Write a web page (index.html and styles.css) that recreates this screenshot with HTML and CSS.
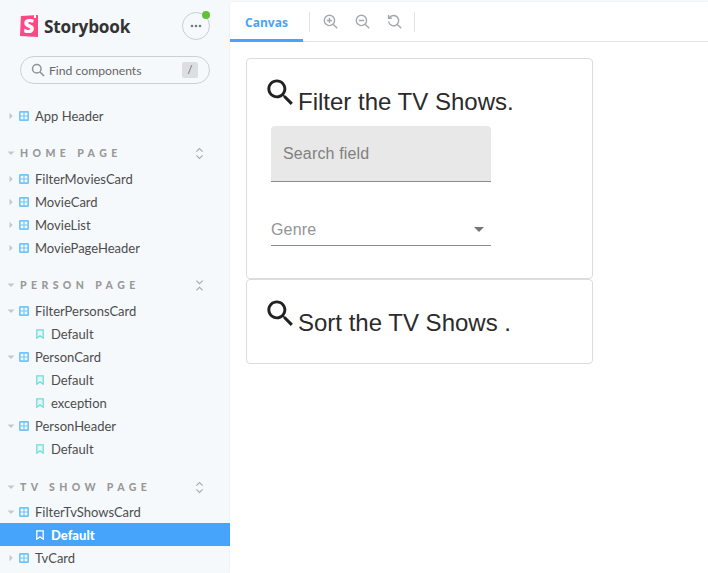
FILE: index.html
```html
<!DOCTYPE html>
<html>
<head>
    <meta charset="utf-8">
    <title>Storybook</title>
    <link rel="stylesheet" href="styles.css">
</head>
<body>
<svg class="defs" width="0" height="0">
    <symbol id="comp" viewBox="0 0 12 12"><path d="M1.500 0h9A1.500 1.500 0 0 1 12 1.500v9a1.500 1.500 0 0 1-1.500 1.500h-9A1.500 1.500 0 0 1 0 10.500v-9A1.500 1.500 0 0 1 1.500 0zM2 2v3.300h3.300V2zm4.700 0v3.300H10V2zM2 6.700V10h3.300V6.700zm4.700 0V10H10V6.700z" fill="#1ea7fd" fill-opacity=".62" fill-rule="evenodd"/></symbol>
    <symbol id="mark" viewBox="0 0 10 12"><path d="M1 .8h8v10.400L5 8.200l-4 3z" fill="#e3f8f6" stroke="#6fdcd6" stroke-width="1.600"/></symbol>
    <symbol id="open" viewBox="0 0 8 8"><path d="M.5 2.500h7L4 6z" fill="#c3c8cc"/></symbol>
    <symbol id="closed" viewBox="0 0 8 8"><path d="M2.500.8v6.400L5.700 4z" fill="#c3c8cc"/></symbol>
    <symbol id="expand" viewBox="0 0 10 14"><path d="M1.500 5L5 1.500 8.500 5M1.500 9L5 12.500 8.500 9" fill="none" stroke="#a5aaae" stroke-width="1.200"/></symbol>
    <symbol id="collapse" viewBox="0 0 10 14"><path d="M1.500 1.500L5 5l3.500-3.500M1.500 12.500L5 9l3.500 3.500" fill="none" stroke="#a5aaae" stroke-width="1.200"/></symbol>
    <symbol id="glass" viewBox="0 0 24 24"><path d="M15.500 14h-.79l-.28-.27C15.410 12.590 16 11.110 16 9.500 16 5.910 13.090 3 9.500 3S3 5.910 3 9.500 5.910 16 9.500 16c1.610 0 3.090-.59 4.230-1.570l.27.280v.79l5 4.990L20.490 19l-4.990-5zm-6 0C7.010 14 5 11.990 5 9.500S7.010 5 9.500 5 14 7.010 14 9.500 11.990 14 9.500 14z"/></symbol>
</svg>

<div class="app">
    <div class="sidebar">
        <div class="brand">
            <div class="logo"><span>S</span></div>
            <div class="wordmark">Storybook</div>
            <div class="menu-btn">
                <svg width="12" height="4" viewBox="0 0 12 4"><circle cx="2" cy="2" r="1.300"/><circle cx="6" cy="2" r="1.300"/><circle cx="10" cy="2" r="1.300"/></svg>
                <i class="dot"></i>
            </div>
        </div>

        <div class="find">
            <svg width="14" height="14" viewBox="0 0 14 14"><circle cx="5.800" cy="5.800" r="4.300" fill="none" stroke="#8f9499" stroke-width="1.500"/><path d="M9 9l4 4" stroke="#8f9499" stroke-width="1.700"/></svg>
            <span>Find components</span>
            <b>/</b>
        </div>

        <div class="row first"><svg class="caret"><use href="#closed"/></svg><svg class="comp"><use href="#comp"/></svg>App Header</div>

        <div class="group"><svg class="caret"><use href="#open"/></svg><span>HOME PAGE</span><svg class="toggle"><use href="#expand"/></svg></div>
        <div class="row"><svg class="caret"><use href="#closed"/></svg><svg class="comp"><use href="#comp"/></svg>FilterMoviesCard</div>
        <div class="row"><svg class="caret"><use href="#closed"/></svg><svg class="comp"><use href="#comp"/></svg>MovieCard</div>
        <div class="row"><svg class="caret"><use href="#closed"/></svg><svg class="comp"><use href="#comp"/></svg>MovieList</div>
        <div class="row"><svg class="caret"><use href="#closed"/></svg><svg class="comp"><use href="#comp"/></svg>MoviePageHeader</div>

        <div class="group"><svg class="caret"><use href="#open"/></svg><span>PERSON PAGE</span><svg class="toggle"><use href="#collapse"/></svg></div>
        <div class="row"><svg class="caret"><use href="#open"/></svg><svg class="comp"><use href="#comp"/></svg>FilterPersonsCard</div>
        <div class="row story"><svg class="mark"><use href="#mark"/></svg>Default</div>
        <div class="row"><svg class="caret"><use href="#open"/></svg><svg class="comp"><use href="#comp"/></svg>PersonCard</div>
        <div class="row story"><svg class="mark"><use href="#mark"/></svg>Default</div>
        <div class="row story"><svg class="mark"><use href="#mark"/></svg>exception</div>
        <div class="row"><svg class="caret"><use href="#open"/></svg><svg class="comp"><use href="#comp"/></svg>PersonHeader</div>
        <div class="row story"><svg class="mark"><use href="#mark"/></svg>Default</div>

        <div class="group tv"><svg class="caret"><use href="#open"/></svg><span>TV SHOW PAGE</span><svg class="toggle"><use href="#expand"/></svg></div>
        <div class="row"><svg class="caret"><use href="#open"/></svg><svg class="comp"><use href="#comp"/></svg>FilterTvShowsCard</div>
        <div class="row story active"><svg class="mark" viewBox="0 0 10 12"><path d="M1 .8h8v10.400L5 8.200l-4 3z" fill="none" stroke="#fff" stroke-width="1.600"/></svg>Default</div>
        <div class="row"><svg class="caret"><use href="#closed"/></svg><svg class="comp"><use href="#comp"/></svg>TvCard</div>
    </div>

    <div class="main">
        <div class="toolbar">
            <div class="tab">Canvas</div>
            <div class="sep"></div>
            <svg class="tool" viewBox="0 0 14 14"><circle cx="6" cy="6" r="4.800"/><path d="M9.500 9.500L13.300 13.300M3.600 6h4.800M6 3.600v4.800"/></svg>
            <svg class="tool" viewBox="0 0 14 14"><circle cx="6" cy="6" r="4.800"/><path d="M9.500 9.500L13.300 13.300M3.600 6h4.800"/></svg>
            <svg class="tool" viewBox="0 0 14 14"><path d="M2.200 3.400A4.800 4.800 0 1 1 1.400 7M9.500 9.500L13.300 13.300M1.500 1v3h3"/></svg>
            <div class="sep"></div>
        </div>

        <div class="canvas">
            <div class="card">
                <h2 class="card-title"><svg><use href="#glass"/></svg>Filter the TV Shows.</h2>
                <div class="field"><span>Search field</span></div>
                <div class="select"><span>Genre</span><i class="arrow"></i></div>
            </div>
            <div class="card">
                <h2 class="card-title"><svg><use href="#glass"/></svg>Sort the TV Shows .</h2>
            </div>
        </div>
    </div>
</div>
</body>
</html>
```

FILE: styles.css
```css
html, body {
    margin: 0;
    height: 100%;
    overflow: hidden;
}

.defs {
    position: absolute;
}

.app {
    display: flex;
    height: 573px;
    background: #f6f9fc;
    font-family: "Lato", sans-serif;
    color: #333;
}

/* sidebar */

.sidebar {
    width: 230px;
    flex: none;
    overflow: hidden;
    box-sizing: border-box;
    padding-top: 12px;
}

.brand {
    display: flex;
    align-items: center;
    height: 28px;
    padding-left: 20px;
}

.logo {
    position: relative;
    width: 18px;
    height: 22px;
    background: #ff4785;
    clip-path: polygon(5% 5%, 100% 0, 100% 100%, 0 96%);
    display: flex;
    align-items: center;
    justify-content: center;
}

.logo::after {
    content: "";
    position: absolute;
    top: 0;
    right: 2px;
    width: 2px;
    height: 3px;
    background: #fff;
}

.logo span {
    color: #fff;
    font-family: "Open Sans", sans-serif;
    font-weight: 800;
    font-size: 19px;
    line-height: 22px;
}

.wordmark {
    margin-left: 6px;
    font-family: "Open Sans", sans-serif;
    font-size: 17.200px;
    font-weight: 700;
    color: #333;
    letter-spacing: -.2px;
}

.menu-btn {
    position: relative;
    margin-left: auto;
    margin-right: 20px;
    width: 26px;
    height: 26px;
    border: 1px solid #c9ced2;
    border-radius: 50%;
    display: flex;
    align-items: center;
    justify-content: center;
}

.menu-btn svg {
    fill: #777;
}

.dot {
    position: absolute;
    top: -2px;
    right: -1px;
    width: 8px;
    height: 8px;
    border-radius: 50%;
    background: #66bf3c;
}

.find {
    display: flex;
    align-items: center;
    box-sizing: border-box;
    height: 28px;
    margin: 16px 20px 0;
    padding: 0 4px 0 10px;
    border: 1px solid #ccd0d4;
    border-radius: 14px;
    font-size: 12.200px;
    color: #666;
}

.find span {
    margin-left: 4px;
}

.find b {
    margin-left: auto;
    margin-right: 7px;
    width: 16px;
    height: 16px;
    border-radius: 2px;
    background: #dcdfe2;
    font-weight: 400;
    font-size: 11px;
    line-height: 16px;
    text-align: center;
}

.row {
    display: flex;
    align-items: center;
    height: 23px;
    font-size: 13px;
    color: #4d4d4d;
}

.row.first {
    margin-top: 20px;
}

.caret {
    width: 8px;
    height: 8px;
    margin-left: 7px;
    flex: none;
}

.comp {
    width: 10px;
    height: 10px;
    margin-left: 4px;
    margin-right: 6px;
    flex: none;
}

.story {
    padding-left: 36px;
}

.mark {
    width: 8px;
    height: 10px;
    margin-right: 7px;
    flex: none;
}

.active {
    background: #47a4fb;
    color: #fff;
    font-weight: 900;
}

.group {
    display: flex;
    align-items: center;
    height: 20px;
    margin-top: 16px;
    margin-bottom: 4px;
    font-size: 10.500px;
    font-weight: 900;
    letter-spacing: 4.400px;
    color: #999;
}

.group.tv {
    margin-top: 17px;
    margin-bottom: 3px;
}

.group .caret {
    margin-left: 7px;
    margin-right: 5px;
}

.toggle {
    width: 9px;
    height: 13px;
    margin-left: auto;
    margin-right: 26px;
}

/* main area */

.main {
    flex: 1;
    margin-top: 2px;
    background: #fff;
    border-top-left-radius: 4px;
    box-shadow: 0 0 2px rgba(0, 0, 0, .08);
}

.toolbar {
    display: flex;
    align-items: center;
    height: 39px;
    border-bottom: 1px solid #e3e5e7;
}

.tab {
    box-sizing: border-box;
    width: 73px;
    height: 40px;
    margin-right: 2px;
    margin-bottom: -1px;
    border-bottom: 3px solid #47a4fb;
    color: #47a4fb;
    font-family: "Open Sans", sans-serif;
    font-size: 12px;
    font-weight: 700;
    line-height: 41px;
    text-align: center;
}

.sep {
    width: 1px;
    height: 20px;
    margin: 0 4px;
    background: #e1e3e5;
}

.tool {
    width: 15px;
    height: 15px;
    margin: 0 8.500px;
    fill: none;
    stroke: #a3a7ab;
    stroke-width: 1.300;
}

.canvas {
    padding: 16px;
}

.card {
    box-sizing: border-box;
    width: 347px;
    padding: 16px 16px 24px;
    border: 1px solid #dcdcdc;
    border-radius: 4px;
    background: #fff;
    font-family: "Liberation Sans", sans-serif;
}

.card-title {
    height: 43px;
    margin: 0;
    font-size: 24px;
    font-weight: 400;
    line-height: 32px;
    color: #2b2b2b;
    white-space: nowrap;
}

.card-title svg {
    width: 35px;
    height: 35px;
    fill: #212121;
}

.field {
    box-sizing: border-box;
    width: 220px;
    height: 56px;
    margin: 8px;
    padding-left: 12px;
    background: #e8e8e8;
    border-bottom: 1px solid #8c8c8c;
    border-radius: 4px 4px 0 0;
    font-size: 16px;
    letter-spacing: .15px;
    line-height: 55px;
    color: #808080;
}

.select {
    display: flex;
    align-items: center;
    justify-content: space-between;
    box-sizing: border-box;
    width: 220px;
    height: 32px;
    margin: 32px 8px 8px;
    padding-right: 7px;
    border-bottom: 1px solid #8c8c8c;
    font-size: 16px;
    letter-spacing: .15px;
    color: #949494;
}

.arrow {
    width: 0;
    height: 0;
    border-left: 5px solid transparent;
    border-right: 5px solid transparent;
    border-top: 5px solid #757575;
}
```
